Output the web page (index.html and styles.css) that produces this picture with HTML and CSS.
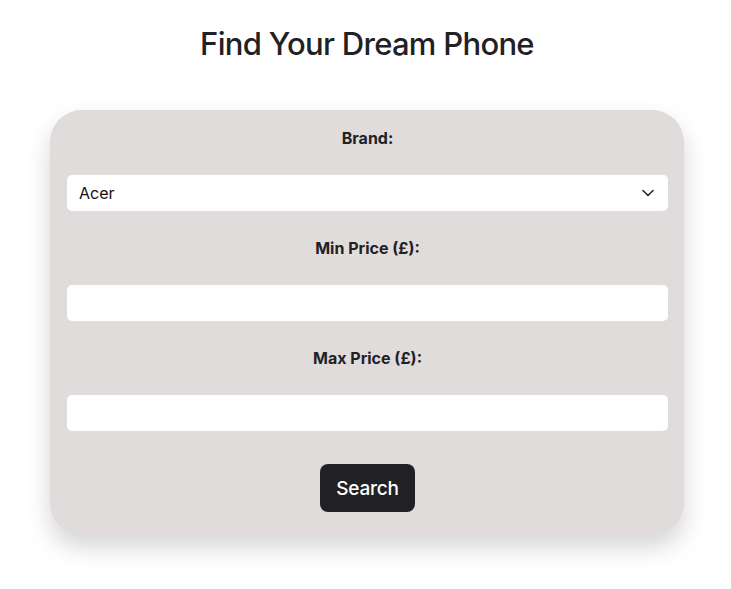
FILE: index.html
```html
<!DOCTYPE html>
<html lang="en">
<head>
<meta charset="utf-8">
<title>Find Your Dream Phone</title>
<link rel="stylesheet" href="styles.css">
</head>
<body>
<main class="page">
  <h1 class="title">Find Your Dream Phone</h1>
  <form class="card">
    <label class="label" for="brand">Brand:</label>
    <div class="select-wrap">
      <select id="brand" class="field select">
        <option>Acer</option>
      </select>
      <svg class="chevron" width="12" height="8" viewBox="0 0 12 8" aria-hidden="true"><path d="M1 1.5 L6 6.5 L11 1.5" fill="none" stroke="#222" stroke-width="1.5" stroke-linecap="round" stroke-linejoin="round"/></svg>
    </div>
    <label class="label" for="min">Min Price (£):</label>
    <input id="min" class="field" type="text">
    <label class="label" for="max">Max Price (£):</label>
    <input id="max" class="field" type="text">
    <button type="button" class="button">Search</button>
  </form>
</main>
</body>
</html>
```
FILE: styles.css
```css
* { box-sizing: border-box; }
html, body { margin: 0; background: #ffffff; }
body {
  font-family: Inter, "Noto Sans", "Liberation Sans", sans-serif;
  color: #212125;
}
.page {
  display: flex;
  flex-direction: column;
  align-items: center;
  padding: 25px 0 54px 3px;
}
.title {
  margin: 0;
  font-size: 31px;
  line-height: 38px;
  font-weight: 500;
  letter-spacing: -0.7px;
}
.card {
  margin-top: 47px;
  width: 634px;
  background: #e0dcdc;
  border-radius: 32px;
  padding: 18px 16px 23px 17px;
  display: flex;
  flex-direction: column;
  align-items: stretch;
  gap: 27px;
  box-shadow: 0 12px 24px rgba(0, 0, 0, 0.17);
}
.label {
  display: block;
  text-align: center;
  font-weight: 700;
  font-size: 16px;
  line-height: 20px;
}
.select-wrap { position: relative; }
.field {
  display: block;
  width: 100%;
  height: 36px;
  border: none;
  border-radius: 5px;
  background: #ffffff;
  font-family: inherit;
  font-size: 16px;
  color: #111;
  padding: 0 12px;
  outline: none;
}
.select {
  appearance: none;
  -webkit-appearance: none;
}
.chevron {
  position: absolute;
  right: 14px;
  top: 14px;
  pointer-events: none;
}
.button {
  align-self: center;
  margin-top: 6px;
  width: 95px;
  height: 48px;
  border: none;
  border-radius: 8px;
  background: #212125;
  color: #ffffff;
  font-family: inherit;
  font-size: 19px;
  font-weight: 500;
  letter-spacing: -0.2px;
}
```
